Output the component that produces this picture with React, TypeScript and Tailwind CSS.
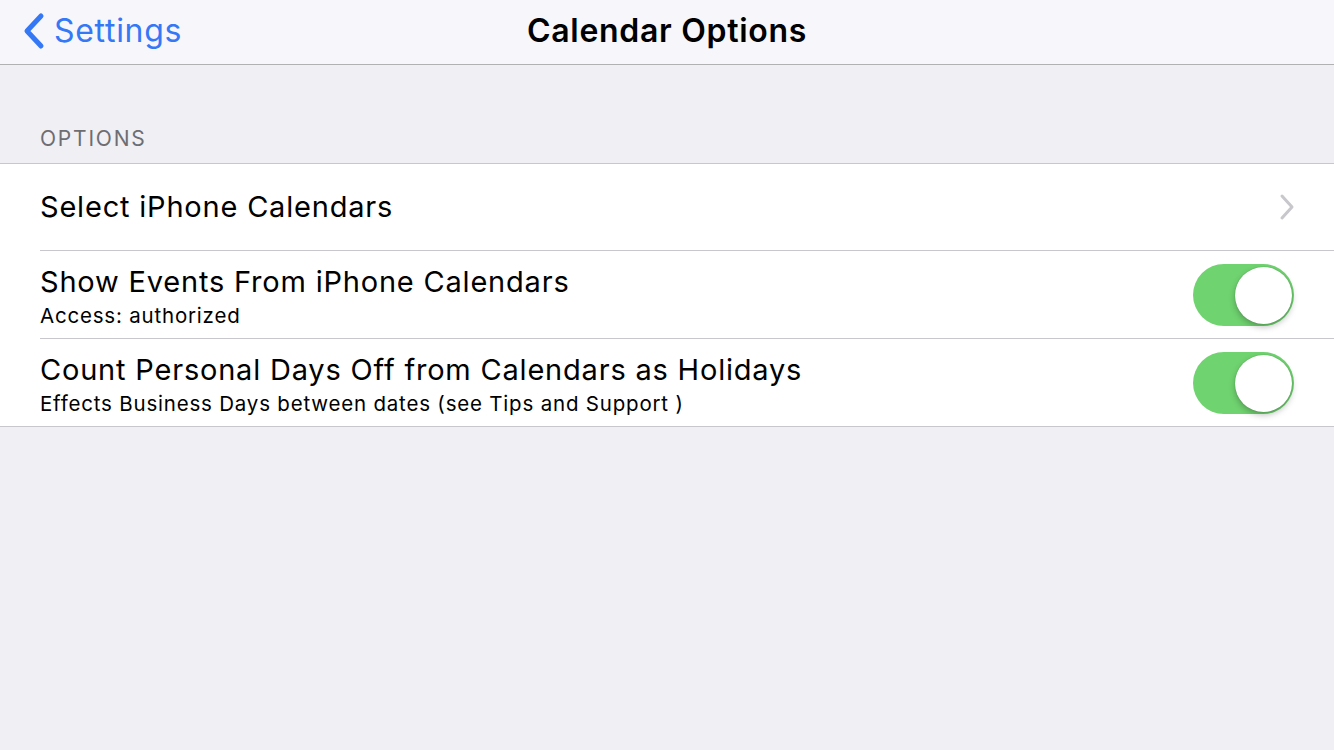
import React from "react";

function Toggle() {
  return (
    <div className="relative w-[101px] h-[62px] rounded-full bg-[#6fd36f] shrink-0">
      <div className="absolute right-[2px] top-[3px] w-[57px] h-[57px] rounded-full bg-white shadow-[0_3px_6px_rgba(0,0,0,0.25),0_0_1px_rgba(0,0,0,0.3)]" />
    </div>
  );
}

export default function App() {
  return (
    <div
      className="w-[1334px] h-[750px] bg-[#efeff4] flex flex-col overflow-hidden"
      style={{ fontFamily: "Inter, 'Noto Sans', sans-serif" }}
    >
      <div className="h-[65px] bg-[#f7f6fa] border-b border-[#b1b1b3] flex items-center relative shrink-0">
        <div className="flex items-center pl-[22px] pb-[3px] text-[#3478f6] text-[32px] gap-[8px] tracking-[0.7px]">
          <svg width="24" height="38" viewBox="0 0 24 38" className="mt-[1px]">
            <path d="M19 4 L5 19 L19 34" fill="none" stroke="#3478f6" strokeWidth="5" strokeLinecap="round" strokeLinejoin="round" />
          </svg>
          <span className="leading-none">Settings</span>
        </div>
        <div className="absolute inset-0 pb-[3px] flex items-center justify-center pointer-events-none">
          <span className="text-[32px] font-semibold text-black tracking-[0.7px] leading-none">Calendar Options</span>
        </div>
      </div>
      <div className="h-[98px] flex items-end pl-[40px] pb-[14px] shrink-0">
        <span className="text-[21px] text-[#6d6d72] tracking-[1.8px] leading-none">OPTIONS</span>
      </div>
      <div className="bg-white border-t border-b border-[#c8c7cc]">
        <div className="h-[86px] flex items-center justify-between pl-[40px] pr-[38px]">
          <span className="text-[29px] text-black tracking-[0.8px]">Select iPhone Calendars</span>
          <svg width="18" height="28" viewBox="0 0 18 28">
            <path d="M4 3 L14 14 L4 25" fill="none" stroke="#c7c7cc" strokeWidth="3" strokeLinecap="round" strokeLinejoin="round" />
          </svg>
        </div>
        <div className="ml-[40px] border-t border-[#c8c7cc]" />
        <div className="h-[87px] flex items-center justify-between pl-[40px] pr-[40px]">
          <div className="flex flex-col pt-[4px]">
            <span className="text-[29px] text-black leading-[34px] tracking-[0.8px]">Show Events From iPhone Calendars</span>
            <span className="text-[20.5px] text-black leading-[26px] mt-[4px] tracking-[0.8px]">Access: authorized</span>
          </div>
          <Toggle />
        </div>
        <div className="ml-[40px] border-t border-[#c8c7cc]" />
        <div className="h-[87px] flex items-center justify-between pl-[40px] pr-[40px]">
          <div className="flex flex-col pt-[4px]">
            <span className="text-[29px] text-black leading-[34px] tracking-[0.8px]">Count Personal Days Off from Calendars as Holidays</span>
            <span className="text-[20.5px] text-black leading-[26px] mt-[4px] tracking-[0.8px]">Effects Business Days between dates (see Tips and Support )</span>
          </div>
          <Toggle />
        </div>
      </div>
    </div>
  );
}
